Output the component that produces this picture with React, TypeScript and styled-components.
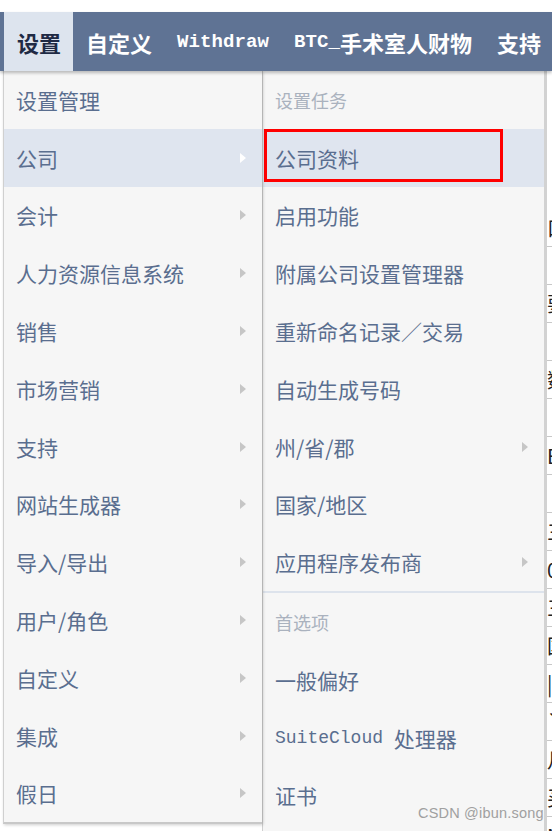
import styled, { createGlobalStyle } from 'styled-components'

const GlobalStyle = createGlobalStyle`
  body {
    margin: 0;
    background: #ffffff;
    font-family: "Noto Sans CJK SC", "Noto Sans", sans-serif;
  }
`

const navItems = [
  { label: '设置', active: true },
  { label: '自定义' },
  { label: 'Withdraw', latin: true },
  { label: 'BTC_', rest: '手术室人财物', latin: true },
  { label: '支持' },
]

const leftItems = [
  { label: '设置管理' },
  { label: '公司', arrow: true, active: true },
  { label: '会计', arrow: true },
  { label: '人力资源信息系统', arrow: true },
  { label: '销售', arrow: true },
  { label: '市场营销', arrow: true },
  { label: '支持', arrow: true },
  { label: '网站生成器', arrow: true },
  { label: '导入/导出', arrow: true },
  { label: '用户/角色', arrow: true },
  { label: '自定义', arrow: true },
  { label: '集成', arrow: true },
  { label: '假日', arrow: true },
]

const taskItems = [
  { label: '公司资料', active: true },
  { label: '启用功能' },
  { label: '附属公司设置管理器' },
  { label: '重新命名记录／交易' },
  { label: '自动生成号码' },
  { label: '州/省/郡', arrow: true },
  { label: '国家/地区' },
  { label: '应用程序发布商', arrow: true },
]

// page content peeking out on the right side
const sideRows = ['口', '', '要', '', '数', '', 'E', '', '三', '0', '三', '国', '|', '丫', '月', '买', 'M']

const App = () => {
  return (
    <Page>
      <GlobalStyle />
      <NavBar>
        {navItems.map((item) => (
          <NavItem key={item.label} $active={item.active}>
            {item.latin ? <Latin>{item.label}</Latin> : item.label}
            {item.rest}
          </NavItem>
        ))}
      </NavBar>

      <Body>
        <LeftMenu>
          {leftItems.map((item) => (
            <MenuRow key={item.label} $active={item.active}>
              {item.label}
              {item.arrow && <Arrow $light={item.active} />}
            </MenuRow>
          ))}
        </LeftMenu>

        <SubMenu>
          <Header>设置任务</Header>
          {taskItems.map((item) => (
            <MenuRow key={item.label} $active={item.active}>
              {item.label}
              {item.arrow && <Arrow />}
              {item.active && <RedMark />}
            </MenuRow>
          ))}
          <Divider />
          <Header>首选项</Header>
          <MenuRow>一般偏好</MenuRow>
          <MenuRow>
            <Mono>SuiteCloud </Mono>处理器
          </MenuRow>
          <MenuRow>证书</MenuRow>
        </SubMenu>

        <SideContent>
          {sideRows.map((c, i) => (
            <SideCell key={i}>{c}</SideCell>
          ))}
        </SideContent>
      </Body>

      <Watermark>CSDN @ibun.song</Watermark>
    </Page>
  )
}

const Page = styled.div`
  position: relative;
  width: 552px;
  height: 831px;
  overflow: hidden;
  padding-top: 12px;
  box-sizing: border-box;
  background: #ffffff;
`

const NavBar = styled.div`
  display: flex;
  align-items: stretch;
  height: 59px;
  padding-left: 4px;
  background: #5f7394;
  box-shadow: 0 2px 3px rgba(0, 0, 0, 0.25);
  position: relative;
  z-index: 2;
`

const NavItem = styled.div<{ $active?: boolean }>`
  display: flex;
  align-items: center;
  padding: 0 12px 0 13px;
  font-size: 22px;
  font-weight: bold;
  white-space: nowrap;
  color: ${(p) => (p.$active ? '#1f2a44' : '#ffffff')};
  background: ${(p) => (p.$active ? '#dde4ee' : 'transparent')};
`

const Latin = styled.span`
  font-family: "Liberation Mono", "DejaVu Sans Mono", monospace;
  font-size: 19px;
  letter-spacing: 0.1px;
`

const Body = styled.div`
  display: flex;
  align-items: flex-start;
  padding-left: 3px;
`

const LeftMenu = styled.div`
  width: 258px;
  background: #f6f6f6;
  border-left: 1px solid #d0d0d0;
  border-bottom: 2px solid #c8c8c8;
  box-shadow: 1px 1px 3px rgba(0, 0, 0, 0.2);
  position: relative;
  z-index: 1;
`

const SubMenu = styled.div`
  width: 281px;
  height: 780px;
  background: #f6f6f6;
  border-left: 1px solid #cfcfcf;
  border-right: 3px solid #d2d2d2;
`

const MenuRow = styled.div<{ $active?: boolean }>`
  position: relative;
  display: flex;
  align-items: center;
  height: 57.8px;
  padding-left: 12px;
  box-sizing: border-box;
  font-size: 21px;
  color: #5a6e8f;
  white-space: nowrap;
  background: ${(p) => (p.$active ? '#dfe5ef' : 'transparent')};
`

const Header = styled(MenuRow)`
  color: #aab2be;
  font-size: 18px;
`

const Mono = styled.span`
  font-family: "Liberation Mono", "DejaVu Sans Mono", monospace;
  font-size: 18px;
  white-space: pre;
`

const Arrow = styled.span<{ $light?: boolean }>`
  position: absolute;
  right: 16px;
  top: 50%;
  margin-top: -5px;
  width: 0;
  height: 0;
  border-top: 5px solid transparent;
  border-bottom: 5px solid transparent;
  border-left: 6px solid ${(p) => (p.$light ? '#ffffff' : '#c6c6c6')};
`

const RedMark = styled.span`
  position: absolute;
  left: 1px;
  top: 0;
  width: 239px;
  height: 53px;
  border: 3px solid #ff0000;
  box-sizing: border-box;
`

const Divider = styled.div`
  height: 2px;
  background: #dde3ec;
`

const SideContent = styled.div`
  flex: 1;
  padding-top: 138px;
  overflow: hidden;
`

const SideCell = styled.div`
  height: 37px;
  border-bottom: 1px solid #c8c8c8;
  font-size: 20px;
  line-height: 37px;
  color: #222;
  white-space: nowrap;
`

const Watermark = styled.div`
  position: absolute;
  left: 418px;
  bottom: 10px;
  font-family: "Liberation Sans", Arial, sans-serif;
  font-size: 14.5px;
  color: #a0a0a0;
  letter-spacing: 0.2px;
`

export default App
